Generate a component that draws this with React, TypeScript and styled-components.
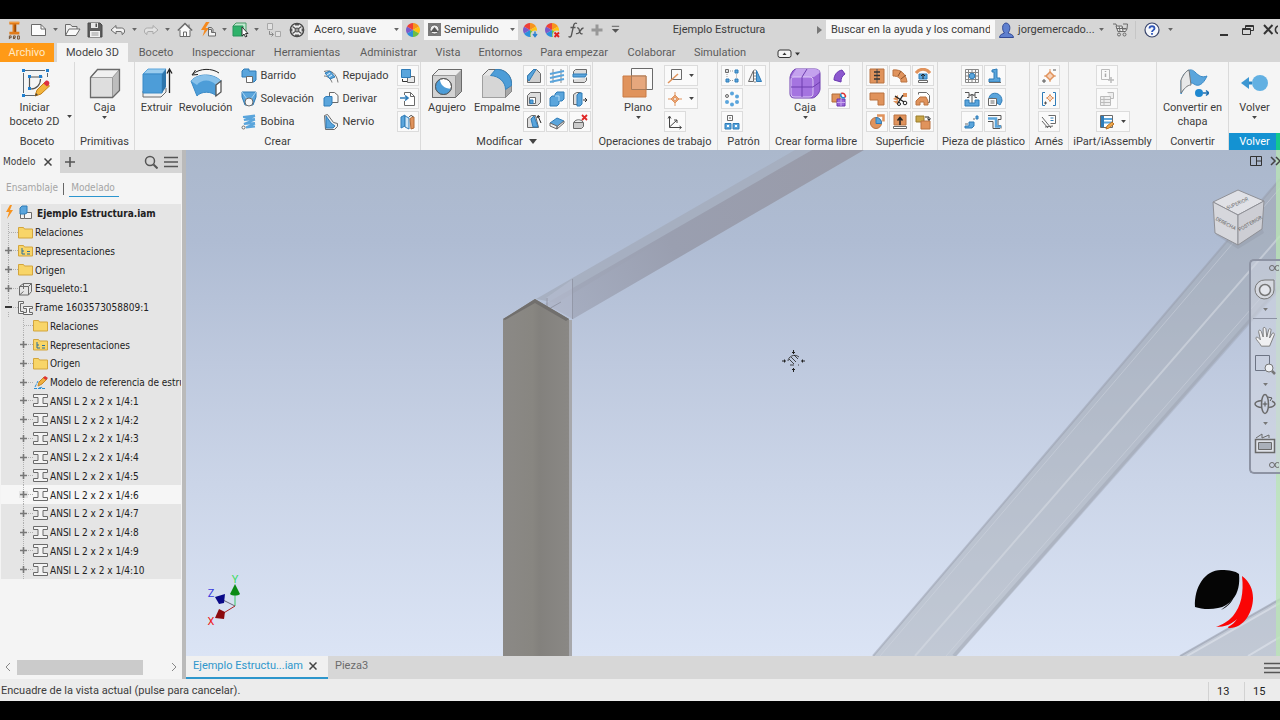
import React from 'react';
import styled, { createGlobalStyle } from 'styled-components';

const ui = 'Roboto, "Open Sans", sans-serif';
const treeFont = '"DejaVu Sans Condensed", "DejaVu Sans", sans-serif';

const Global = createGlobalStyle`
  * { box-sizing: border-box; }
  body { margin: 0; background: #000; font-family: ${ui}; font-size: 11px; line-height: 14px; color: #3c3c3c; }
  button { border: 0; padding: 0; margin: 0; background: none; font: inherit; color: inherit; cursor: pointer; }
  svg { display: block; flex: none; }
`;

const Frame = styled.div`
  min-height: 100vh;
  padding: 19px 0;
  display: flex;
  flex-direction: column;
  overflow: hidden;
`;

/* ---------- title bar ---------- */
const TitleBar = styled.header`
  height: 24px;
  display: flex;
  align-items: center;
  background: #d6d6d6;
  padding: 0 0 3px 2px;
`;
const ToolSlot = styled.button<{ $w: number }>`
  width: ${p => p.$w}px;
  height: 21px;
  flex: none;
  display: flex;
  align-items: center;
  justify-content: center;
  overflow: hidden;
`;
const Combo = styled.label<{ $icon?: boolean }>`
  width: 94px;
  height: 20px;
  margin: 0 1px;
  flex: none;
  display: flex;
  align-items: center;
  background: #f6f6f6;
  padding: 0 3px 0 ${p => (p.$icon ? 4 : 6)}px;
  gap: 3px;
`;
const ComboSelect = styled.select`
  appearance: none;
  border: 0;
  padding: 0;
  flex: 1;
  min-width: 0;
  background: none;
  font: 11px/16px ${ui};
  color: #3c3c3c;
  overflow: hidden;
  text-overflow: clip;
`;
const DocTitle = styled.h1`
  flex: 1;
  margin: 0;
  text-align: center;
  font-size: 11px;
  font-weight: 400;
  white-space: nowrap;
`;
const Search = styled.input`
  width: 169px;
  height: 19px;
  border: 0;
  padding: 0 5px;
  background: #f8f8f8;
  font: 11px/14px ${ui};
  color: #3c3c3c;
  &::placeholder { color: #3c3c3c; opacity: 1; }
`;
const User = styled.button`
  width: 101px;
  display: flex;
  align-items: center;
  gap: 2px;
  padding-left: 3px;
  white-space: nowrap;
`;
const TitleRule = styled.span`
  width: 2px;
  height: 18px;
  border-left: 1px solid #c6c6c6;
`;
const WindowButtons = styled.div`
  display: flex;
  margin-left: 38px;
`;

/* ---------- ribbon ---------- */
const TabRow = styled.nav`
  height: 19px;
  display: flex;
  background: #d6d6d6;
  color: #5c5c5c;
`;
const RibbonTab = styled.button<{ $w: number; $kind?: 'file' | 'on' }>`
  width: ${p => p.$w}px;
  height: 19px;
  flex: none;
  white-space: nowrap;
  margin-right: ${p => (p.$kind === 'file' ? 3 : 0)}px;
  background: ${p => (p.$kind === 'file' ? '#ff9a17' : p.$kind === 'on' ? '#f5f5f5' : 'transparent')};
  color: ${p => (p.$kind === 'file' ? '#ffe9c4' : p.$kind === 'on' ? '#444' : '#5c5c5c')};
`;
const Ribbon = styled.div`
  height: 88px;
  display: flex;
  background: #f5f5f5;
  overflow: hidden;
`;
const Panel = styled.section<{ $w: number; $last?: boolean }>`
  width: ${p => p.$w}px;
  flex: ${p => (p.$last ? '1 0 auto' : 'none')};
  display: flex;
  flex-direction: column;
  border-right: ${p => (p.$last ? 0 : 1)}px solid #dadada;
`;
const PanelBody = styled.div<{ $wideCells?: boolean }>`
  flex: 1;
  display: flex;
  justify-content: center;
  padding: 3px ${p => (p.$wideCells ? 12 : 0)}px 0 0;
`;
const PanelName = styled.h2<{ $active?: boolean }>`
  margin: 0;
  height: 17px;
  font-size: 11px;
  line-height: 16px;
  font-weight: 400;
  display: flex;
  align-items: center;
  justify-content: center;
  gap: 6px;
  white-space: nowrap;
  color: ${p => (p.$active ? '#fff' : '#3c3c3c')};
  background: ${p => (p.$active ? 'linear-gradient(90deg, #1492d2 calc(100% - 4px), #14c88c 0)' : 'none')};
`;
const BigButton = styled.button<{ $w: number }>`
  width: ${p => p.$w}px;
  display: flex;
  flex-direction: column;
  align-items: center;
  align-self: flex-start;
  padding-top: 2px;
  line-height: 14px;
  white-space: pre-line;
  span { margin: 2px 0 1px; }
`;
const BesideArrow = styled.span`
  align-self: flex-end;
  margin-bottom: 15px;
`;
const List = styled.div<{ $w: number; $inset?: boolean }>`
  width: ${p => p.$w}px;
  margin-left: ${p => (p.$inset ? 6 : 0)}px;
  display: flex;
  flex-direction: column;
  gap: 2px;
`;
const ListItem = styled.button`
  height: 21px;
  display: flex;
  align-items: center;
  gap: 4px;
  white-space: nowrap;
`;
const IconGrid = styled.div<{ $cols: number }>`
  display: grid;
  align-self: flex-start;
  grid-template-columns: repeat(${p => p.$cols}, 22px);
  grid-auto-rows: 21px;
  gap: 2px 1px;
`;
const Cell = styled.button<{ $col?: number; $wide?: boolean }>`
  grid-column: ${p => p.$col ?? 'auto'};
  width: ${p => (p.$wide ? 34 : 22)}px;
  display: flex;
  align-items: center;
  justify-content: space-around;
  border: 1px solid #dcdcdc;
  background: #fafafa;
`;

/* ---------- work area ---------- */
const Work = styled.main`
  flex: 1;
  display: flex;
  min-height: 506px;
`;
const Browser = styled.aside`
  width: 186px;
  flex: none;
  display: flex;
  flex-direction: column;
  background: #f4f4f4;
  border-right: 4px solid #bababa;
`;
const BrowserTabs = styled.div`
  height: 23px;
  display: flex;
  align-items: center;
  background: #d5d5d5;
  padding-right: 1px;
`;
const BrowserTab = styled.button`
  width: 60px;
  height: 23px;
  display: flex;
  align-items: center;
  gap: 8px;
  padding-left: 3px;
  background: #f4f4f4;
  font: 10px/14px ${treeFont};
`;
const Spring = styled.span`
  flex: 1;
`;
const Modes = styled.div`
  height: 31px;
  display: flex;
  align-items: center;
  padding-left: 6px;
  gap: 5px;
  font: 10px/14px ${treeFont};
`;
const Mode = styled.button<{ $on?: boolean }>`
  height: 16px;
  color: #a4a4a4;
  border-bottom: ${p => (p.$on ? '1px solid #2b95cf' : '1px solid transparent')};
  padding: 0 ${p => (p.$on ? 4 : 0)}px 0 ${p => (p.$on ? 2 : 0)}px;
`;
const ModeRule = styled.span`
  width: 1px;
  height: 12px;
  background: #666;
`;
const Tree = styled.ul`
  list-style: none;
  margin: 0 1px;
  padding: 0;
  height: 375px;
  display: grid;
  grid-template-rows: repeat(20, 1fr);
  font: 10px/16px ${treeFont};
  color: #222;
  background: #e5e5e5;
  overflow: hidden;
`;
const TreeRow = styled.li<{ $depth: number; $hot?: boolean; $root?: boolean }>`
  display: flex;
  align-items: center;
  min-width: 0;
  overflow: hidden;
  padding-left: ${p => p.$depth * 15}px;
  white-space: nowrap;
  font-weight: ${p => (p.$root ? 700 : 400)};
  background: ${p => (p.$hot ? '#f6f6f6' : 'transparent')};
`;
const Expander = styled.button`
  width: 17px;
  height: 19px;
  flex: none;
`;
const TreeText = styled.span<{ $root?: boolean }>`
  padding: 2px 0 0 ${p => (p.$root ? 3 : 2)}px;
`;
const ScrollRow = styled.div`
  height: 22px;
  margin: auto 0 3px;
  padding: 4px 5px 0;
  display: flex;
  align-items: center;
`;
const ScrollTrack = styled.div`
  flex: 1;
  margin: 0 7px 0 6px;
`;
const ScrollThumb = styled.div`
  width: 86%;
  height: 15px;
  background: #cbcbcb;
`;
const Right = styled.div`
  flex: 1;
  min-width: 0;
  display: flex;
  flex-direction: column;
`;
const Viewport = styled.div`
  flex: 1;
  position: relative;
  overflow: hidden;
  background: linear-gradient(#abb8cc 0%, #afbcd3 18%, #bec9de 42%, #cbd5e8 66%, #dbe4f5 100%);
`;
const Scene = styled.svg`
  position: absolute;
  inset: 0;
  width: 100%;
  height: 100%;
`;
const ViewTools = styled.div`
  position: absolute;
  top: 5px;
  right: -1px;
  display: flex;
  gap: 8px;
`;
const NavBar = styled.div`
  position: absolute;
  top: 109px;
  right: 0;
  width: 31px;
  height: 215px;
  display: flex;
  flex-direction: column;
  align-items: center;
  justify-content: space-between;
  padding: 3px 1px 3px 0;
  border: 2px solid #8d93a3;
  border-right: 0;
  border-radius: 5px 0 0 5px;
  background: rgba(206, 212, 224, 0.6);
`;
const Grip = styled.span`
  align-self: flex-end;
`;
const NavRule = styled.span`
  width: 24px;
  height: 1px;
  background: #8d93a3;
`;
const DocTabs = styled.div`
  height: 23px;
  display: flex;
  align-items: center;
  background: #d7d7d7;
  overflow: hidden;
`;
const DocTab = styled.button<{ $on?: boolean }>`
  height: 23px;
  display: flex;
  align-items: center;
  gap: 6px;
  padding: 0 8px 2px 7px;
  white-space: nowrap;
  width: ${p => (p.$on ? 142 : 60)}px;
  color: ${p => (p.$on ? '#2e97cc' : '#6b6b6b')};
  background: ${p => (p.$on ? '#f0f0f0' : 'transparent')};
  border-bottom: 2px solid ${p => (p.$on ? '#2e97cc' : 'transparent')};
`;
const StatusBar = styled.footer`
  height: 22px;
  display: flex;
  align-items: center;
  background: #ececec;
  padding: 2px 0 0 1px;
`;
const StatusText = styled.span`
  flex: 1;
`;
const Count = styled.span`
  width: 36px;
  height: 19px;
  line-height: 19px;
  border-left: 1px solid #d2d2d2;
  padding-left: 8px;
  color: #222;
`;

/* ---------- icons ---------- */
const B = '#5aa5dc';
const BD = '#2f7cb8';
const O = '#e0935c';
const G = '#6a6a6a';

type IconProps = { s?: number; w?: number; v?: number; children: React.ReactNode };
const Ico = ({ s = 16, w, v = s, children }: IconProps) => (
  <svg width={w ?? s} height={s} viewBox={`0 0 ${w ? (w * v) / s : v} ${v}`} fill="none" stroke={G} strokeWidth="1" aria-hidden="true">
    {children}
  </svg>
);
const Caret = ({ c = '#444', big = false }: { c?: string; big?: boolean }) => (
  <svg width={big ? 8 : 5} height={big ? 5 : 3} viewBox="0 0 8 5" aria-hidden="true"><path d="M0 0h8L4 5z" fill={c} /></svg>
);
const Close = ({ s = 8 }: { s?: number }) => (
  <svg width={s} height={s} viewBox="0 0 8 8" aria-hidden="true"><path d="M0.5 0.5l7 7M7.5 0.5l-7 7" stroke="#444" strokeWidth="1.5" /></svg>
);
const Wheel = ({ mark }: { mark?: 'down' | 'x' }) => (
  <Ico>
    <g stroke="none">
      <path d="M8 8V1a7 7 0 0 1 6 3.500z" fill="#f7941d" /><path d="M8 8l6-3.500a7 7 0 0 1 0 7z" fill="#ffc20e" />
      <path d="M8 8l6 3.500A7 7 0 0 1 8 15z" fill="#6cbe45" /><path d="M8 8v7a7 7 0 0 1-6-3.500z" fill="#2a8fdc" />
      <path d="M8 8l-6 3.500a7 7 0 0 1 0-7z" fill="#7a5bc9" /><path d="M8 8L2 4.500A7 7 0 0 1 8 1z" fill="#ee4036" />
      {mark && <circle cx="13" cy="13" r="4.500" fill="#d6d6d6" />}
    </g>
    {mark === 'down' && <path d="M13 9.500v4M11 12l2 2.500 2-2.500" stroke="#2a7fd0" strokeWidth="1.500" />}
    {mark === 'x' && <path d="M10.500 10.500l4.500 4.500M15 10.500L10.500 15" stroke="#e02020" strokeWidth="1.800" />}
  </Ico>
);

const quick: Record<string, React.ReactNode> = {
  logo: <Ico s={20} w={13} v={22}><g stroke="none"><path d="M1.500 2h11v3H9v8h3.500v3h-11v-3H5V5H1.500z" fill="#e07b1a" /><path d="M7 5h2v8H7z" fill="#9b4a08" /><path d="M1.500 2h11v1h-11z" fill="#f6a850" /></g><path d="M1.500 21v-3.500h2v2h-2M6 21v-3.500h2v2H6l2 1.500M10.500 17.500h2V21h-2z" stroke="#6b4a2c" /></Ico>,
  new: <Ico s={17}><path d="M1.500 3.500h9.500l4.500 4.500v6.500h-14z" fill="#fcfcfc" /><path d="M11 3.500V8h4.500" /></Ico>,
  open: <Ico s={17}><path d="M1.500 14.500v-11h5l1.500 2h5v2.500" fill="#eee" /><path d="M1.500 14.500L5 8h11l-4 6.500z" fill="#fafafa" /></Ico>,
  save: <Ico><path d="M1 1h12l2 2v12H1z" fill="#5d5d5d" stroke="#4a4a4a" /><path d="M4 1h7v5H4z" fill="#e6e6e6" stroke="none" /><path d="M8.500 1.500h1.500v3.500H8.500z" fill="#555" stroke="none" /><path d="M3 9h10v6H3z" fill="#f2f2f2" stroke="none" /><path d="M4.500 11h7M4.500 13h7" stroke="#999" /></Ico>,
  undo: <Ico><path d="M1 8l5-4.500V6h5.500c4 0 4 5.500.500 6.500.500-2.500-.500-3-2-3H6v2.500z" fill="#f2f2f2" /></Ico>,
  redo: <Ico><path d="M15 8l-5-4.500V6H4.500C.500 6 .500 11.500 4 12.500c-.500-2.500.500-3 2-3h4v2.500z" fill="#e2e2e2" stroke="#aaa" /></Ico>,
  home: <Ico><path d="M.800 8.500L8 1.500l7.200 7" strokeWidth="1.400" /><path d="M3 8l5-5 5 5v7H3z" fill="#fafafa" stroke="none" /><path d="M6.500 15v-5h3v5M3 8v6.500h10V8M12 2.500V5" /></Ico>,
  bolt: <Ico s={17}><path d="M6 1L1 9h3.500l-2 6.500L9 7H5.500L9.500 1z" fill="#f58a1f" stroke="none" /><path d="M8.500 8.500h3v3h4v3.500h-7z" fill="#f4f4f4" /><path d="M8.500 9v-2.500h3l1.500 2v2.500" /></Ico>,
  cube: <Ico s={17}><path d="M1 5l3-3h10v10" fill="#bfe9cf" stroke="#4a9a68" /><path d="M1 5h10v10H1z" fill="#2fb26a" stroke="#27935a" /><path d="M10 6v9l2-2 1.500 3 1.500-.800-1.500-2.700H16z" fill="#fff" stroke="#333" /></Ico>,
  sync: <Ico><path d="M1.500 1.500h5v6h-5zM9.500 9.500h5v5h-5z" stroke="#a8a8a8" fill="#e2e2e2" /><path d="M3.500 9v3.500H7M5.500 10.500l2 2-2 2" stroke="#8a8a8a" /></Ico>,
  wheel: <Ico><circle cx="8" cy="8" r="6.700" fill="#ededed" stroke="#444" strokeWidth="1.300" /><circle cx="8" cy="8" r="2" stroke="#555" fill="#999" /><path d="M3.500 4.500L7 7M12.500 4.500L9 7M3.500 11.500L7 9M12.500 11.500L9 9" stroke="#555" strokeWidth="1.400" /><path d="M6 2.500h4M6 13.500h4M2.500 6.500v3M13.500 6.500v3" stroke="#555" strokeWidth="1.800" /></Ico>,
  fx: <Ico s={18}><path d="M10 2.500c-2-1-3 0-3.500 2.500l-2 9c-.400 2-1.500 2.500-3 1.500M3.500 6.500h5M10 7c1.500-.500 2 .500 2.500 3s1.500 3.500 3 2.500M16.500 7c-2 0-3 2.500-4 4s-2 2-3.500 1.500" stroke="#555" strokeWidth="1.300" /></Ico>,
  plus: <Ico s={14}><path d="M7 1.500v11M1.500 7h11" stroke="#989898" strokeWidth="3" /></Ico>,
  more: <Ico s={11} v={12}><path d="M2 2.500h8" stroke="#555" /><path d="M2 5.500h8L6 9.500z" fill="#555" stroke="none" /></Ico>,
  user: <Ico s={18}><path d="M1.500 16.500c0-3 3-3.500 5-4.500-2.500-2.500-3-9.500 1.500-10 5 .500 4.500 7.500 2 10 2 1 5.500 1.500 5.500 4.500z" fill="#5f80cf" stroke="#334a94" /></Ico>,
  cart: <Ico s={17}><path d="M1 3h3l2 7.500h7.500" /><path d="M4 5h6l1 3h4l-1.500 2.500H6z" fill="#eee" /><path d="M7 5l1 5M10 6l1 4M4.500 7.500H14" /><circle cx="7" cy="13.500" r="1.500" /><circle cx="12.500" cy="13.500" r="1.500" /><path d="M11 3h4.500L15 8" /></Ico>,
  help: <Ico><circle cx="8" cy="8" r="7" fill="#f6f8fc" stroke="#39456c" strokeWidth="1.200" /><path d="M5.500 6.500c0-3 5-3 5 0 0 1.500-2.500 1.800-2.500 3.500M8 11v1.800" stroke="#2e55b8" strokeWidth="1.800" /></Ico>,
  min: <Ico s={14}><path d="M3 12h8" stroke="#333" strokeWidth="2" /></Ico>,
  restore: <Ico s={14}><path d="M4.500 5V2.500h8v5H10M1.500 5.500h8v6h-8zM1.500 6.500h8M4.500 3.500h8" stroke="#333" /></Ico>,
  close: <Ico s={14} w={16}><path d="M2 2l8.500 9M10.500 2L2 11" stroke="#333" strokeWidth="2" /><path d="M16 3a4 4 0 0 0 0 7.500" stroke="#333" strokeWidth="1.500" /></Ico>,
};

const big: Record<string, React.ReactNode> = {
  sketch: <Ico s={32}><path d="M4.500 6v20M6 3.500h20M4 28.500h13M28.500 6v4" stroke="#5c6670" /><path d="M10.500 10h13M10.500 10v11M21.500 12c0 6-4 10-10 10" stroke="#555" strokeWidth="1.200" /><g fill="#1f7fd0" stroke="none"><path d="M3 2h3v3H3zM27 2h3v3h-3zM3 27h3v3H3zM9 8h3v3H9zM20 8h3v3h-3zM9 20h3v3H9z" /></g><path d="M16 29l2-6 8-8 4.500 4-8.500 8z" fill="#f2b43c" stroke="#c47f18" /><path d="M24.500 16.500l2-2.500c2-1.500 5 1.500 3.500 3.500l-2 2z" fill="#dd3040" stroke="none" /><path d="M16 29l1-3 2 2z" fill="#444" stroke="none" /></Ico>,
  box: <Ico s={32}><path d="M1.500 10.500l7-8h22v21l-7 7h-22z" fill="#f0f0f0" /><path d="M1.500 10.500h22v20h-22z" fill="#dedede" stroke="#a2a2a2" /><path d="M23.500 10.500l7-8v21l-7 7z" fill="#bdbdbd" stroke="#999" /><path d="M1.500 10.500l7-8h22v21l-7 7h-22z" strokeWidth="1.300" /></Ico>,
  extrude: <Ico s={32}><path d="M2 24v6h18l5-5v-4" fill="#f0f0f0" /><path d="M2 7l5-5h18l-4 5z" fill="#9accee" stroke={B} /><path d="M2 7h19v19H2z" fill="#4d9dd8" stroke="#3b8ac6" /><path d="M21 7l4-5v18l-4 6z" fill="#2d75ab" stroke="none" /><path d="M28.500 26V3M26 6.500L28.500 2 31 6.500" stroke="#222" strokeWidth="1.300" /></Ico>,
  revolve: <Ico s={32}><path d="M3 7C10 1 22 1 29 6" stroke="#222" /><path d="M5.500 3L2 8l6-.500" stroke="#222" /><path d="M1 14c7-8 22-8 30 0l-5 15c-4-5-15-5-19 0z" fill="#4d9dd8" stroke="#3b8ac6" /><path d="M1 14c7-8 22-8 30 0l-5 4c-5-6-15-6-19 0z" fill="#88c1ea" stroke="none" /><path d="M26 18l5-4v11l-5 4z" fill="#fff" stroke="#555" strokeWidth="1.300" /></Ico>,
  hole: <Ico s={32}><path d="M1.500 8.500l6-6h23v22l-6 6h-23z" fill="#ececec" /><path d="M24.500 8.500l6-6v22l-6 6z" fill="#aaa" stroke="none" /><path d="M1.500 8.500h23v22h-23z" fill="#d3d3d3" stroke="#999" /><path d="M1.500 8.500l6-6h23v22l-6 6h-23z" /><circle cx="12.500" cy="19.500" r="8" fill="#fff" /><path d="M9 12.300a8 8 0 1 0 11 9.500C14 22 9 18 9 12.300z" fill="#4d9dd8" stroke="none" /><circle cx="12.500" cy="19.500" r="8" stroke="#555" /></Ico>,
  fillet: <Ico s={32}><path d="M1.500 30.500v-22l6-6h9c8 0 14 6 14 14v8l-6 6z" fill="#e6e6e6" /><path d="M1.500 30.500v-22H9c8 0 15.500 5 15.500 14v8z" fill="#d6d6d6" stroke="none" /><path d="M24.500 22.500l6-5v7l-6 6z" fill="#a8a8a8" stroke="#888" /><path d="M14.500 2.500c9-1 16 6 16 14v2l-6 4C24.500 15 18 9 9.500 8.500z" fill="#4d9dd8" stroke="#3683bd" /></Ico>,
  plane: <Ico s={32}><path d="M9.500 1.500h21v21h-21z" fill="#fafafa" /><path d="M1 9h23v21H1z" fill={O} stroke="#c97a44" /><path d="M9.500 9v13.500H24V9z" fill="#e6a77d" stroke="#a87a58" /></Ico>,
  freeform: <Ico s={32}><path d="M7 2h18c4 0 6 1 6 5v15c0 3-4 9-8 9H6c-4 0-5-2-5-5V11C1 8 4 2 7 2z" fill="#9c68d8" stroke="#6f3fb0" /><path d="M7 2h18c4 0 6 1 5.500 4L25 10H2z" fill="#c4a2ee" stroke="none" /><path d="M2 13c0-2 1-3 3-3h15c3 0 4 1 4 4v12c0 3-1 4-4 4H6c-3 0-4-1-4-4z" fill="#a574e0" stroke="#dcc8f6" /><path d="M13 10v20M2 20h22M13 10l5-8M24 20l7-5" stroke="#6f3fb0" /></Ico>,
  sheet: <Ico s={32}><path d="M4 14C8 2 14 1 18 5s7 6 12 4c-4 9-9 11-13 8S8 18 4 27z" fill="#5aa5dc" stroke="#3b8ac6" /><path d="M4 13c2-5 5-9 8-10l2 15c-4 0-7 4-10 8z" fill="#e8e8e8" stroke="#777" /><circle cx="22" cy="26" r="4" fill="#1f88d0" stroke="none" /><path d="M26 26h5M29 23.500l3 2.500-3 2.500" stroke="#1f6fb0" strokeWidth="1.500" /></Ico>,
  back: <Ico s={32}><circle cx="21" cy="16" r="8" fill="#62b0e2" stroke="none" /><path d="M13 16H7" stroke="#2b86c4" strokeWidth="3" /><path d="M10 10v12l-8-6z" fill="#3d97d2" stroke="none" /></Ico>,
};

const sm: Record<string, React.ReactNode> = {
  sweep: <><path d="M1 7V3l2-2h5v2h7v9l-2 2H6v-5H1z" fill={B} stroke={BD} /><path d="M5.500 8.500h6v6h-6z" fill="#fff" /></>,
  loft: <><path d="M1 1h14v5l-3 8H4L1 6z" fill={B} stroke={BD} /><path d="M1 1l5 7M15 1l-5 7" stroke="#a8d4f2" /><circle cx="8" cy="11" r="4" fill="#f6f6f6" /></>,
  coil: <><path d="M2 3l12-1.500M14 2L3 6l11-1M14 5.500L3 10l11-1M14 9.500L5 13.500l9-1" stroke={B} strokeWidth="2" /><circle cx="2.500" cy="13.500" r="1.500" fill="#fff" /></>,
  emboss: <><path d="M1 3.500C8 1 14 6 15 14.500M1 8c4 0 7 3 8 6.500" stroke="#777" /><path d="M2 5l5-2 5 6-5 2z" fill={B} stroke={BD} /><path d="M4 7l3-2M6 9l3-2" stroke="#e8f4fc" /></>,
  derive: <><path d="M6.500 1.500h5l3.500 3v7H6.500z" fill="#fafafa" /><path d="M1 7l2-1.500h6V13l-2 2H1z" fill={B} stroke={BD} /></>,
  rib: <><path d="M1.500 1.500l3-1 6 8 4 1v3l-3 3h-9z" fill="#f0f0f0" /><path d="M3 2l5 7 4 3-2 2H3z" fill={B} stroke={BD} /></>,
  c1: <><path d="M7.500 8.500h7v6h-7z" fill="#e8e8e8" /><path d="M1.500 1.500h9v8h-9z" fill={B} stroke={BD} /><path d="M2.500 11v2.500H7" stroke="#333" /></>,
  c2: <><path d="M4.500 4V1.500h6l4 4v9h-10V10" fill="#fff" /><path d="M10.500 1.500v4h4" /><path d="M0 7h7M5 4.500L8 7 5 9.500" stroke={BD} strokeWidth="1.600" /></>,
  c3: <><path d="M1 3l4-2v11l-4 2z" fill={B} stroke={BD} /><path d="M5 2l4 2v11l-4-2z" fill="#cfe6f6" stroke={BD} /><path d="M10 5c1-2 2-2 4-2v11l-3 1z" fill={O} stroke="#b06c3a" /><path d="M9 3c2-2 3-2 4 0" stroke="#333" /></>,
  m1: <><path d="M1.500 14.500V8l6-6.500h3l4 4v9z" fill="#cfcfcf" /><path d="M1.500 11V8l6-6.500h2.500L3 13z" fill={B} stroke={BD} /></>,
  m2: <><path d="M4 1v14M12 1v14" stroke="#888" /><path d="M1 6l14-3M1 10l14-3M1 14l14-3" stroke={B} strokeWidth="2" /></>,
  m3: <><path d="M1.500 3.500l2-2h11v4l-2 1.500h-11zM1.500 11.500v3h11l2-2v-3" fill="#ddd" /><path d="M1 6h14l-2 3H1z" fill={B} stroke={BD} /></>,
  m4: <><path d="M1.500 4.500l3-3h10v10l-3 3h-10z" fill="#ddd" /><path d="M3.500 6.500h6v6h-6z" fill="#fff" /><path d="M4 9h3v3.500H4z" fill={B} stroke={BD} /></>,
  m5: <><path d="M1 7l2-2h3V3l2-2h7v7l-2 2h-3v3l-2 2H1z" fill={B} stroke={BD} /><path d="M6 5h4v5" stroke="#b6dcf5" /></>,
  m6: <><path d="M1.500 3.500l3-2h4v12h-7z" fill="#ddd" /><path d="M5 4l2-2h3v11l-2 2H5z" fill={B} stroke={BD} /><path d="M11 9h4M13 7l2 2-2 2" stroke="#333" /></>,
  m7: <><path d="M1.500 13.500v-9l4-3h4l3 12z" fill="#ddd" /><path d="M5 5l3-3 4 11H7z" fill={B} stroke={BD} /><path d="M15 9l-3-7M11 4l1-2.500 2 1.500" stroke="#222" /></>,
  m8: <><path d="M1 9l7-5 7 3-7 6z" fill={B} stroke={BD} /><path d="M1 9v3l7 3v-3zM8 15l7-6V7l-7 5.500z" fill="#eee" /></>,
  m9: <><path d="M1.500 8.500h10v4l-2 2h-8z" fill="#ccc" /><path d="M2 8c2-3 7-3 9 0" fill="#eee" /><path d="M10 1l5 5M15 1l-5 5" stroke="#e02828" strokeWidth="1.800" /></>,
  w1: <><path d="M4.500 1.500h10v10h-10z" fill="#fafafa" /><path d="M1 15L11 6" stroke={O} strokeWidth="1.500" /></>,
  w2: <><path d="M8 1v14M1 8h14" stroke={O} /><path d="M8 4l4 4-4 4-4-4z" fill="#e9a577" stroke={O} /><circle cx="8" cy="8" r="1.500" fill="#fff" stroke={O} /></>,
  w3: <><path d="M2.500 3v10.500H14M2.500 13L10 6M1 4.500L2.500 2 4 4.500M12.500 12l2 1.500-2 1.500M7 6h3v3" stroke="#444" /></>,
  p1: <><path d="M1.500 1.500h3v3h-3z" fill="#ddd" /><path d="M11 2h3v3h-3zM2 11h3v3H2zM11 11h3v3h-3z" fill={B} stroke={BD} /><path d="M6 3h4M6 12.500h4M3 6v4M12.500 6.500v3.500" stroke="#999" strokeDasharray="1 1" /></>,
  p2: <><g fill={B} stroke="none"><circle cx="8" cy="2.500" r="2" /><circle cx="13" cy="5.500" r="2" /><circle cx="13" cy="11" r="2" /><circle cx="8" cy="13.500" r="2" /><circle cx="3" cy="11" r="2" /></g><circle cx="3" cy="5" r="1.500" fill="#ddd" /></>,
  p3: <><path d="M3.500 1.500h5v5h-5z" /><path d="M5 4h2" /><path d="M1 9.500h6v5.500H1zM9 9.500h6v5.500H9z" fill={B} stroke={BD} /><path d="M3 12h2M11 12h2" stroke="#fff" strokeWidth="2" /></>,
  p4: <><path d="M6.500 2.500v11h-5z" fill="#eee" /><path d="M9.500 2.500v11h5z" fill={B} stroke={BD} /><path d="M8 1v14" stroke="#888" strokeDasharray="2 1" /></>,
  f1: <path d="M3 12C3 7 6 3 11 2l3 4c-3 2-4 4-4 8z" fill="#8c58cf" stroke="#6a38b0" />,
  f2: <><path d="M1 3h8v8H1z" fill={O} stroke="#b06c3a" /><path d="M6 8h8v7H6z" fill="#9a66d8" stroke="#6a38b0" /><path d="M10 8v7M6 11.500h8" stroke="#c9abee" /><path d="M10 2.500a3 3 0 0 1 4 4" stroke="#d33" strokeWidth="1.500" /><path d="M14 6.500a3 3 0 0 1-4-4" stroke="#28c" strokeWidth="1.500" /></>,
  s1: <><path d="M1 1h14v14H1z" fill={O} stroke="#b97241" /><path d="M8 1v14" stroke="#555" /><path d="M5 4h6M5 7.500h6M5 11h6" stroke="#333" strokeWidth="1.300" /></>,
  s2: <><path d="M1 2c8-1 13 4 14 12H9c0-4-3-6-8-6z" fill={O} stroke="#b97241" /><path d="M6 8l3-5M9 11l5-4" stroke="#8f5228" /></>,
  s3: <><path d="M1 5c4-5 10-5 14 0" stroke={O} strokeWidth="3" /><path d="M4 6h8v5H4z" fill={B} stroke={BD} /><path d="M8 11V6M6 8l2-2 2 2" stroke="#222" /><path d="M3.500 12.500h9v2h-9z" fill="#fff" /></>,
  s4: <path d="M1 2h14v12H9V9H1z" fill={O} stroke="#b97241" />,
  s5: <><path d="M1 8l5-4v6zM11 2h4v4h-4zM1 10h5v4z" fill={O} stroke="none" /><path d="M3 5l9 6M6 12l5-8" stroke="#222" strokeWidth="1.400" /><circle cx="13" cy="12" r="1.800" stroke="#222" /><circle cx="7" cy="13" r="1.500" stroke="#222" /></>,
  s6: <><path d="M3.500 3.500v-2h8l3 3v7h-2" fill="#fff" /><path d="M1 10l4-4h6l2 4v4h-4v-3H5v3H1z" fill={O} stroke="#b97241" /></>,
  s7: <><circle cx="7" cy="9" r="5.500" fill={O} stroke="#b97241" /><path d="M7 3.500a5.500 5.500 0 0 1 5.500 6H7z" fill={B} stroke={BD} /><path d="M8 1.500h6.500v6" stroke={O} strokeWidth="2.500" /></>,
  s8: <><path d="M2 1h12v10H2z" fill={O} stroke="#b97241" /><path d="M8 11V4M5.500 6.500L8 3.500l2.500 3" stroke="#222" strokeWidth="1.500" /><path d="M1.500 12.500h13v2h-13z" fill="#fff" /></>,
  s9: <><path d="M1 2h8v6H1z" fill="#c9a648" stroke="#9a7c2c" /><path d="M6 7h9v8H6z" fill={O} stroke="#b97241" /><path d="M10 3h4v3M12.500 4.500L14 6.500l1.500-2" stroke="#222" /></>,
  q1: <><path d="M1.500 1.500h13v13h-13zM4.500 1v14M8 1v14M11.500 1v14M1 4.500h14M1 8h14M1 11.500h14" stroke="#888" /><circle cx="8" cy="8" r="2.800" fill={B} stroke={BD} /></>,
  q2: <><path d="M5 2l5-1v9h3v4H2v-3h5V4H5z" fill={B} stroke={BD} /><path d="M2 14.500h12" /></>,
  q3: <><path d="M1 1.500h4v5H3M15 1.500h-4v5h2M5 4h2M9 4h2M8 13V3M6.500 5L8 3l1.500 2" stroke="#555" /><path d="M1 9h4v3h6V9h4v6H1z" fill={B} stroke={BD} /></>,
  q4: <><path d="M2 8c0-8 13-8 13 2l-2 4-3-2c0-4-5-6-8-4z" fill={B} stroke={BD} /><path d="M1.500 7.500h8v7h-8z" fill="#fafafa" /><path d="M3.500 10h4M3.500 12h4" /></>,
  q5: <><path d="M1 12h4V8h5v4l-2 2H1z" fill={B} stroke={BD} /><path d="M12 2h2v3h-2z" fill={B} stroke={BD} /><path d="M1 10h3M9 5h2" /></>,
  q6: <><path d="M1 1.500h13v4h-3v6h3v3" stroke="#555" /><path d="M1 4.500h8v8h5" stroke={B} strokeWidth="2.500" /><path d="M1 7.500h5v7h7" stroke="#555" /></>,
  a1: <><path d="M9 1v13M3 8h12" stroke={O} /><path d="M9 4l4 4-4 4-4-4z" fill="#f6d3bb" stroke={O} strokeWidth="1.500" /><path d="M1 13h4M3 11v4M12 2h3" stroke="#555" /></>,
  a2: <><path d="M4 1.500H1.500v13H4M12 1.500h2.500v13H12" stroke={BD} /><path d="M9 3v8M5 7h8" stroke={O} /><path d="M9 4l3 3-3 3-3-3z" fill="#f6d3bb" stroke={O} /><path d="M3 12h3M4.500 10.500v3" stroke="#555" /></>,
  a3: <><path d="M1 3l9 11M1 7l6 7M4 13l8-1" stroke="#666" /><path d="M7.500 1.500h7v8h-5" fill="#fff" /><path d="M9.500 4h3M9.500 6.500h3" stroke={BD} /></>,
  i1: <><path d="M2.500 1.500h8v10h-8z" stroke="#bbb" /><path d="M6.500 3v1M6.500 5.500V9" stroke="#aaa" strokeWidth="1.500" /><path d="M12 9v6M9 12h6" stroke="#bbb" strokeWidth="1.500" /></>,
  i2: <path d="M1.500 5.500h10v9h-10zM1.500 8.500h10M1.500 11.500h10M5 5.500v9M8.500 1.500h6v6h-3" stroke="#bbb" fill="#eee" />,
  i3: <><path d="M1.500 1.500h12v12h-12z" fill="#fff" /><path d="M2 2h3v11H2z" fill={BD} stroke="none" /><path d="M5 5h8M5 8.500h8" stroke={B} strokeWidth="2" /><path d="M7 15l1-3 5-4 2 2-5 4z" fill="#f0a94a" stroke="#b97024" /></>,
};

const folder = <path d="M.500 2.500h5l1 1.500h8v9h-14z" fill="#f8d568" stroke="#d3a53c" />;
const treeIcons: Record<string, React.ReactNode> = {
  folder,
  rep: <>{folder}<path d="M4 5v6h3M4 8h2M9 8.500h3M9 11h3" stroke="#2a6f9c" /></>,
  part: <><path d="M1.500 5.500l4-3h8v8l-3 3.500h-9zM1.500 5.500h9V14M10.500 5.500l3-3M5.500 2.500V8M5.500 10.500l-4 3.500" fill="none" /></>,
  frame: <><path d="M.500 1.500h5v2h-3v8h3v2h-5zM5.500 6.500h9v2h-3v4h3v2h-9v-2h3v-4h-3z" fill="#f6f6f6" /></>,
  ref: <><path d="M1 13.500h12M2 12l3-6M6 13l4-1" stroke="#2b8fd4" strokeDasharray="3 1" /><path d="M5 11l1-4 5-5 3 2-5 5z" fill="#f0b040" stroke="#c98622" /><path d="M10 3l2-2 3 2-2 2z" fill="#d33" stroke="none" /></>,
  beam: <path d="M.500 1.500h14v3H10v6h4.500v3H.500v-3H5v-6H.500z" fill="#f4f4f4" />,
  asm: <><path d="M6.500 7.500h7v6h-7zM2.500 8v5.500h4" fill="#f4f4f4" /><path d="M2 3l2-2h5v7l-2 1H2z" fill={B} stroke={BD} /></>,
};

type Row = { t: string; icon: string; d: number; e?: '+' | '-'; hot?: boolean };
const rows: Row[] = [
  { t: 'Relaciones', icon: 'folder', d: 0 },
  { t: 'Representaciones', icon: 'rep', d: 0, e: '+' },
  { t: 'Origen', icon: 'folder', d: 0, e: '+' },
  { t: 'Esqueleto:1', icon: 'part', d: 0, e: '+' },
  { t: 'Frame 1603573058809:1', icon: 'frame', d: 0, e: '-' },
  { t: 'Relaciones', icon: 'folder', d: 1 },
  { t: 'Representaciones', icon: 'rep', d: 1, e: '+' },
  { t: 'Origen', icon: 'folder', d: 1, e: '+' },
  { t: 'Modelo de referencia de estructura', icon: 'ref', d: 1, e: '+' },
  ...Array.from({ length: 10 }, (_, i): Row => ({ t: `ANSI L 2 x 2 x 1/4:${i + 1}`, icon: 'beam', d: 1, e: '+', hot: i === 5 })),
];

const Branch = ({ e }: { e?: string }) => (
  <svg width="17" height="19" viewBox="0 0 17 19" fill="none" aria-hidden="true">
    <path d="M7.500 0v19M8 9.500h9" stroke="#b0b0b0" strokeDasharray="1 1" />
    {e && <path d="M3 6h9v7H3z" fill="#e5e5e5" />}
    {e === '+' && <path d="M4 9.500h7M7.500 6v7" stroke="#777" strokeWidth="1.600" />}
    {e === '-' && <path d="M4 9h7" stroke="#222" strokeWidth="1.800" />}
  </svg>
);

const Tool = ({ n, w, label }: { n: string; w: number; label: string }) => (
  <ToolSlot $w={w} aria-label={label}>{quick[n]}</ToolSlot>
);
const Drop = ({ w = 10 }: { w?: number }) => <ToolSlot $w={w} aria-label="Más opciones"><Caret c="#666" /></ToolSlot>;
const Cells = ({ cols, ids, wide = [] }: { cols: number; ids: string[]; wide?: string[] }) => (
  <IconGrid $cols={cols}>
    {ids.map(id => (
      <Cell key={id} aria-label={id} $wide={wide.includes(id)}><Ico>{sm[id]}</Ico>{wide.includes(id) && <Caret />}</Cell>
    ))}
  </IconGrid>
);
const Item = ({ id, children }: { id: string; children: string }) => (
  <ListItem><Ico>{sm[id]}</Ico>{children}</ListItem>
);
const Large = ({ id, w, drop, children }: { id: string; w: number; drop?: boolean; children: string }) => (
  <BigButton $w={w}>{big[id]}<span>{children}</span>{drop && <Caret />}</BigButton>
);

const tabs: [string, number, ('file' | 'on')?][] = [
  ['Archivo', 54, 'file'], ['Modelo 3D', 71, 'on'], ['Boceto', 56], ['Inspeccionar', 79], ['Herramientas', 88],
  ['Administrar', 75], ['Vista', 44], ['Entornos', 61], ['Para empezar', 86], ['Colaborar', 69], ['Simulation', 68],
];

const SceneDrawing = () => (
  <Scene viewBox="186 150 1094 506" preserveAspectRatio="xMidYMid slice" aria-hidden="true">
    <defs>
      <linearGradient id="rail" x1="560" y1="310" x2="840" y2="150" gradientUnits="userSpaceOnUse">
        <stop offset="0" stopColor="#a0a6b8" stopOpacity=".75" /><stop offset=".4" stopColor="#9a9fb0" /><stop offset="1" stopColor="#999ba9" />
      </linearGradient>
      <linearGradient id="post" x1="503" x2="569" y1="0" y2="0" gradientUnits="userSpaceOnUse">
        <stop offset="0" stopColor="#8b8986" /><stop offset=".45" stopColor="#888681" /><stop offset=".55" stopColor="#83817d" /><stop offset="1" stopColor="#8a8885" />
      </linearGradient>
    </defs>
    <path d="M536 299L795 150h17L557 303z" fill="#a4adbd" opacity=".85" />
    <path d="M545 304l267-154h52L573 319z" fill="url(#rail)" />
    <path d="M546 298l27-19v40l-26-12z" fill="#bcc4d6" opacity=".45" />
    <path d="M572.500 279v40M547 298v12l14-8" fill="none" stroke="#9398a8" />
    <path d="M503 319l32-20 34 20v337h-66z" fill="url(#post)" />
    <path d="M503 319l32-20 34 20-3 2-31-18-30 17z" fill="#716f6d" />
    <path d="M570.500 320v336" stroke="#a7a8ac" strokeWidth="3" />
    <path d="M873 656L1280 179v109L956 656z" fill="#9a9fa6" opacity=".4" />
    <path d="M873 656L1280 179" stroke="#979dac" strokeWidth="2" opacity=".5" />
    <path d="M954 656l326-369" stroke="#8f95a4" strokeWidth="4" opacity=".3" />
    <path d="M880 656L1280 188M946 656l334-380" stroke="#d5dae4" opacity=".45" />
    <path d="M915 656L1280 236" stroke="#d6dbe3" strokeWidth="2" opacity=".6" />
    <path d="M1180 656l100-57v57z" fill="#9a9fa6" opacity=".4" />
    <path d="M1180 656l100-57" stroke="#979dac" strokeWidth="2" opacity=".6" />
    <path d="M1248 656l32-19M1187 656l93-53" stroke="#e2e6ee" strokeWidth="2" opacity=".6" />
    <path d="M1276 150h4v506h-4z" fill="#b9e6b4" opacity=".75" />

    <g>
      <path d="M1216 235l22 14 26-16-3-8h-40z" fill="#8e94a2" opacity=".35" />
      <path d="M1213 202l25-12 26 11-26 14z" fill="#e0e1e6" stroke="#8f9096" />
      <path d="M1213 202l25 13v30l-23-12z" fill="#d6d7dc" stroke="#8f9096" />
      <path d="M1264 201l-26 14v30l24-16z" fill="#cdced4" stroke="#8f9096" />
      <g fontFamily="Roboto, sans-serif" fontSize="5" fill="#666" textAnchor="middle">
        <text transform="translate(1238 205) rotate(-24)">SUPERIOR</text>
        <text transform="translate(1225 225) rotate(28)">DERECHA</text>
        <text transform="translate(1251 225) rotate(-30)">POSTERIOR</text>
      </g>
    </g>

    <g>
      <path d="M235 606v-12" stroke="#3ac864" /><path d="M235 606l-12-6" stroke="#667" /><path d="M235 606l-13 8" stroke="#a22" />
      <path d="M230 594l5-10 5 10c-2 2-8 2-10 0z" fill="#0a8a14" />
      <path d="M215 597l10-3-1 9-5 1z" fill="#0a0a88" />
      <path d="M219 609l6 3-1 7-9-1z" fill="#8c0a0e" />
      <g fontFamily="Roboto, sans-serif" fontSize="11" textAnchor="middle">
        <text x="235" y="583" fill="#3ddc64">Y</text><text x="211" y="597" fill="#3838dd">Z</text><text x="211" y="625" fill="#ee2020">X</text>
      </g>
    </g>

    <g stroke="#222" fill="none">
      <path d="M788 361c0-4 6-8 11-4M789 359l5 5M791 357l5 5M794 355l4 4M790 365h4M798 365h1" strokeWidth=".8" />
      <path d="M793.500 350v4M793.500 368v4M782 361h4M801 361h4" />
      <path d="M792 352.500h3M792 369.500h3M784.500 359.500v3M802.500 359.500v3" />
    </g>

    <path d="M1195 607c-1-20 10-37 26-37 9 0 14 1 18 4 1 10-1 19-6 25-2 4-7 9-12 11 4-3 9-7 11-11-3 5-8 8-14 9-8 2-17 1-23-1z" fill="#050505" />
    <path d="M1242 576c8 6 11 14 11 22 0 15-10 30-23 30-1 0-2 0-2-1 4-2 7-5 9-8-5 5-12 8-21 8 5-2 12-5 17-11 8-10 11-23 9-40z" fill="#fa0505" />
  </Scene>
);

export default function App() {
  return (
    <>
      <Global />
      <Frame>
        <TitleBar>
          <Tool n="logo" w={24} label="Inventor" />
          <Tool n="new" w={24} label="Nuevo" /><Drop />
          <Tool n="open" w={24} label="Abrir" />
          <Tool n="save" w={22} label="Guardar" />
          <Tool n="undo" w={23} label="Deshacer" /><Drop />
          <Tool n="redo" w={23} label="Rehacer" /><Drop w={11} />
          <Tool n="home" w={24} label="Inicio" />
          <Tool n="bolt" w={22} label="Actualizar" /><Drop />
          <Tool n="cube" w={23} label="Seleccionar" /><Drop w={9} />
          <Tool n="sync" w={25} label="Sincronizar" />
          <Tool n="wheel" w={21} label="Material" />
          <Combo>
            <ComboSelect aria-label="Material"><option>Acero, suave</option></ComboSelect><Caret c="#666" />
          </Combo>
          <ToolSlot $w={20} aria-label="Aspecto"><Wheel /></ToolSlot>
          <Combo $icon>
            <Ico s={13} v={16}><path d="M0 0h16v16H0z" fill="#7a7a7a" stroke="none" /><circle cx="8" cy="8" r="5.500" fill="#eee" stroke="#555" /><path d="M3 11l5-6 5 6z" fill="#555" stroke="none" /></Ico>
            <ComboSelect aria-label="Acabado"><option>Semipulido</option></ComboSelect><Caret c="#666" />
          </Combo>
          <ToolSlot $w={22} aria-label="Ajustar"><Wheel mark="down" /></ToolSlot>
          <ToolSlot $w={22} aria-label="Borrar"><Wheel mark="x" /></ToolSlot>
          <Tool n="fx" w={25} label="Parámetros" />
          <Tool n="plus" w={18} label="Añadir" />
          <Tool n="more" w={19} label="Personalizar" />
          <DocTitle>Ejemplo Estructura</DocTitle>
          <ToolSlot $w={13} aria-label="Buscar"><Ico s={8}><path d="M1 0l5 4-5 4z" fill="#777" stroke="none" /></Ico></ToolSlot>
          <Search type="text" aria-label="Búsqueda" placeholder="Buscar en la ayuda y los comandos" />
          <User>{quick.user}jorgemercado...</User><Drop />
          <Tool n="cart" w={29} label="Tienda" />
          <TitleRule />
          <Tool n="help" w={29} label="Ayuda" /><Drop w={8} />
          <WindowButtons>
            <Tool n="min" w={23} label="Minimizar" />
            <Tool n="restore" w={25} label="Restaurar" />
            <Tool n="close" w={20} label="Cerrar" />
          </WindowButtons>
        </TitleBar>

        <TabRow>
          {tabs.map(([t, w, k]) => <RibbonTab key={t} $w={w} $kind={k}>{t}</RibbonTab>)}
          <ToolSlot $w={70} aria-label="Minimizar cinta"><Ico s={12} w={24}><rect x="1" y="2" width="13" height="7.500" rx="2" stroke="#333" fill="#f4f4f4" /><path d="M5.500 7h4L7.500 4.500z" fill="#333" stroke="none" /><path d="M18 4.500h5l-2.500 3z" fill="#333" stroke="none" /></Ico></ToolSlot>
        </TabRow>

        <Ribbon>
          <Panel $w={75}>
            <PanelBody>
              <Large id="sketch" w={64}>{'Iniciar\nboceto 2D'}</Large>
              <BesideArrow><Caret /></BesideArrow>
            </PanelBody>
            <PanelName>Boceto</PanelName>
          </Panel>
          <Panel $w={60}>
            <PanelBody><Large id="box" w={50} drop>Caja</Large></PanelBody>
            <PanelName>Primitivas</PanelName>
          </Panel>
          <Panel $w={286}>
            <PanelBody>
              <Large id="extrude" w={40}>Extruir</Large>
              <Large id="revolve" w={58}>Revolución</Large>
              <List $w={82} $inset><Item id="sweep">Barrido</Item><Item id="loft">Solevación</Item><Item id="coil">Bobina</Item></List>
              <List $w={74}><Item id="emboss">Repujado</Item><Item id="derive">Derivar</Item><Item id="rib">Nervio</Item></List>
              <Cells cols={1} ids={['c1', 'c2', 'c3']} />
            </PanelBody>
            <PanelName>Crear</PanelName>
          </Panel>
          <Panel $w={172}>
            <PanelBody>
              <Large id="hole" w={49}>Agujero</Large>
              <Large id="fillet" w={51}>Empalme</Large>
              <Cells cols={3} ids={['m1', 'm2', 'm3', 'm4', 'm5', 'm6', 'm7', 'm8', 'm9']} />
            </PanelBody>
            <PanelName>Modificar <Caret big /></PanelName>
          </Panel>
          <Panel $w={125}>
            <PanelBody $wideCells>
              <Large id="plane" w={51} drop>Plano</Large>
              <Cells cols={1} ids={['w1', 'w2', 'w3']} wide={['w1', 'w2']} />
            </PanelBody>
            <PanelName>Operaciones de trabajo</PanelName>
          </Panel>
          <Panel $w={52}>
            <PanelBody>
              <IconGrid $cols={2}>
                <Cell aria-label="p1"><Ico>{sm.p1}</Ico></Cell><Cell aria-label="p4"><Ico>{sm.p4}</Ico></Cell>
                <Cell aria-label="p2" $col={1}><Ico>{sm.p2}</Ico></Cell>
                <Cell aria-label="p3" $col={1}><Ico>{sm.p3}</Ico></Cell>
              </IconGrid>
            </PanelBody>
            <PanelName>Patrón</PanelName>
          </Panel>
          <Panel $w={93}>
            <PanelBody>
              <Large id="freeform" w={46} drop>Caja</Large>
              <Cells cols={1} ids={['f1', 'f2']} />
            </PanelBody>
            <PanelName>Crear forma libre</PanelName>
          </Panel>
          <Panel $w={75}>
            <PanelBody><Cells cols={3} ids={['s1', 's2', 's3', 's4', 's5', 's6', 's7', 's8', 's9']} /></PanelBody>
            <PanelName>Superficie</PanelName>
          </Panel>
          <Panel $w={92}>
            <PanelBody><Cells cols={2} ids={['q1', 'q2', 'q3', 'q4', 'q5', 'q6']} /></PanelBody>
            <PanelName>Pieza de plástico</PanelName>
          </Panel>
          <Panel $w={39}>
            <PanelBody><Cells cols={1} ids={['a1', 'a2', 'a3']} /></PanelBody>
            <PanelName>Arnés</PanelName>
          </Panel>
          <Panel $w={88}>
            <PanelBody $wideCells><Cells cols={1} ids={['i1', 'i2', 'i3']} wide={['i3']} /></PanelBody>
            <PanelName>iPart/iAssembly</PanelName>
          </Panel>
          <Panel $w={72}>
            <PanelBody><Large id="sheet" w={66}>{'Convertir en\nchapa'}</Large></PanelBody>
            <PanelName>Convertir</PanelName>
          </Panel>
          <Panel $w={51} $last>
            <PanelBody><Large id="back" w={51} drop>Volver</Large></PanelBody>
            <PanelName $active>Volver</PanelName>
          </Panel>
        </Ribbon>

        <Work>
          <Browser>
            <BrowserTabs>
              <BrowserTab>Modelo <Close /></BrowserTab>
              <ToolSlot $w={19} aria-label="Añadir panel"><Ico s={10}><path d="M5 0v10M0 5h10" stroke="#555" strokeWidth="1.600" /></Ico></ToolSlot>
              <Spring />
              <ToolSlot $w={20} aria-label="Buscar"><Ico s={14}><circle cx="6" cy="6" r="4.500" stroke="#555" strokeWidth="1.500" /><path d="M9.500 9.500l4 4" stroke="#555" strokeWidth="2" /></Ico></ToolSlot>
              <ToolSlot $w={20} aria-label="Menú"><Ico s={14}><path d="M0 2.500h14M0 7h14M0 11.500h14" stroke="#555" strokeWidth="1.600" /></Ico></ToolSlot>
            </BrowserTabs>
            <Modes><Mode>Ensamblaje</Mode><ModeRule /><Mode $on>Modelado</Mode></Modes>
            <Tree>
              <TreeRow $depth={0} $root>
                <Expander as="span"><Ico s={17}><path d="M9 1L5 8h3l-2 7 6-9H9l2-5z" fill="#f79420" stroke="none" /></Ico></Expander>
                <Ico s={16}>{treeIcons.asm}</Ico>
                <TreeText $root>Ejemplo Estructura.iam</TreeText>
              </TreeRow>
              {rows.map(r => (
                <TreeRow key={`${r.d}${r.t}`} $depth={r.d} $hot={r.hot}>
                  <Expander aria-label={r.t}><Branch e={r.e} /></Expander>
                  <Ico s={15} v={15}>{treeIcons[r.icon]}</Ico>
                  <TreeText>{r.t}</TreeText>
                </TreeRow>
              ))}
            </Tree>
            <ScrollRow>
              <Ico s={8} w={6}><path d="M5 0L1 4l4 4" stroke="#888" /></Ico>
              <ScrollTrack><ScrollThumb /></ScrollTrack>
              <Ico s={8} w={6}><path d="M1 0l4 4-4 4" stroke="#888" /></Ico>
            </ScrollRow>
          </Browser>

          <Right>
            <Viewport>
              <SceneDrawing />
              <ViewTools>
                <button aria-label="Ventanas"><Ico s={12}><path d="M.500 1.500h11v9H.500zM6.500 1.500v9M6.500 6h5" stroke="#333" /></Ico></button>
                <button aria-label="Expandir"><Ico s={12} w={11}><path d="M1 2l4 4-4 4M6 2l4 4-4 4" stroke="#444" strokeWidth="1.500" /></Ico></button>
              </ViewTools>
              <NavBar>
                <Grip><Ico s={8} w={10}><rect x=".500" y="1.500" width="5" height="5" rx="2.500" /><rect x="6" y="1.500" width="5" height="5" rx="2.500" /></Ico></Grip>
                <button aria-label="Rueda de navegación"><Ico s={22}><path d="M11 1h9v10a9.500 9.500 0 1 1-9-10z" fill="#d6d9e0" stroke="#777" /><circle cx="11" cy="11" r="5.500" fill="#e4e6ec" stroke="#777" strokeWidth="1.500" /></Ico></button>
                <Caret c="#777" />
                <NavRule />
                <button aria-label="Encuadre"><Ico s={22} v={24}><path d="M8 22c-2-4-6-7-6-9 1-2 3 0 5 2L5 6c0-2 2-2 3 0l2 6V3c0-2 2-2 3 0l1 9 2-8c1-2 3-1 2.500 1L17 13l3-5c1-1 3 0 2 2l-5 12z" fill="#f0f0f2" stroke="#777" /></Ico></button>
                <button aria-label="Zoom"><Ico s={22}><path d="M1.500 1.500h14v15h-14z" stroke="#6d7484" /><circle cx="15" cy="14" r="4" fill="#eef0f4" stroke="#777" /><path d="M18 17l3 3" stroke="#777" strokeWidth="2.500" /></Ico></button>
                <Caret c="#777" />
                <button aria-label="Órbita"><Ico s={22}><path d="M8 7.500C3 8 1 9.500 1 11s3 3.500 7 3.500M14 14.500c4 0 7-2 7-3.500s-1-2-3-3" strokeWidth="1.500" /><ellipse cx="11" cy="11" rx="3.500" ry="9.500" strokeWidth="1.500" /><path d="M8.500 11h5M11 8.500v5M14 4l4 1-2 3" stroke="#555" /></Ico></button>
                <Caret c="#777" />
                <button aria-label="Mirar a"><Ico s={22}><path d="M1.500 7.500h19v13h-19z" fill="#dfe2e8" strokeWidth="1.500" /><path d="M4.500 10.500h13v7h-13z" fill="#aab0ba" /><path d="M2 6l6-4v4l7-3v3" /></Ico></button>
                <Grip><Ico s={8} w={10}><rect x=".500" y="1.500" width="5" height="5" rx="2.500" /><rect x="6" y="1.500" width="5" height="5" rx="2.500" /></Ico></Grip>
              </NavBar>
            </Viewport>
            <DocTabs>
              <DocTab $on>Ejemplo Estructu...iam <Close /></DocTab>
              <DocTab>Pieza3</DocTab>
              <Spring />
              <ToolSlot $w={16} aria-label="Lista de documentos"><Ico s={14} w={16}><path d="M0 2.500h16M0 7h16M0 11.500h16" stroke="#555" strokeWidth="1.600" /></Ico></ToolSlot>
            </DocTabs>
          </Right>
        </Work>

        <StatusBar>
          <StatusText>Encuadre de la vista actual (pulse para cancelar).</StatusText>
          <Count>13</Count><Count>15</Count>
        </StatusBar>
      </Frame>
    </>
  );
}
